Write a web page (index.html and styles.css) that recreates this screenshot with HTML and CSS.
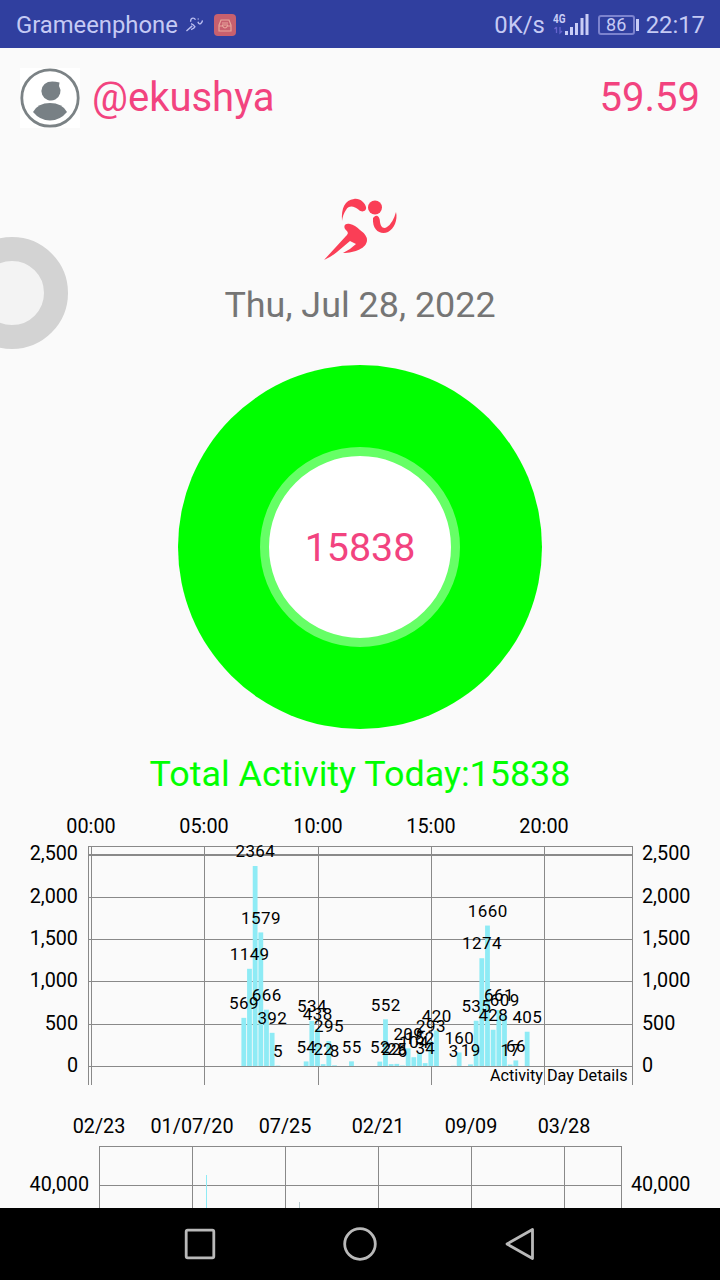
FILE: index.html
```html
<!DOCTYPE html>
<html lang="en">
<head>
<meta charset="utf-8">
<title>Activity</title>
<link rel="stylesheet" href="styles.css">
</head>
<body>
<div class="screen">
  <div class="status-bar">
    <span class="carrier">Grameenphone</span>
    <svg class="run-small" viewBox="0 0 74 64"><g fill="none" stroke="currentColor" stroke-width="6"><path d="M20 20Q20 4 31 4Q38 4 41 11M51 8h4M52 20Q56 34 65 27Q70 22 72 14M22 28Q34 33 39 42Q36 50 22 54M2 60L27 38"/></g></svg>
    <svg class="app-badge" viewBox="0 0 22 22"><rect width="22" height="22" rx="4" fill="#c8606e"/><g fill="none" stroke="#e8a59c" stroke-width="1.2"><path d="M5 17V11L7 6H15L17 11V17Z"/><path d="M5 12H8.500Q11 16 13.500 12H17M8 9H14M8 11H14"/></g></svg>
    <span class="speed">0K/s</span>
    <svg class="signal" viewBox="0 0 37 24">
      <text x="0" y="10" class="net" textLength="12.500" lengthAdjust="spacingAndGlyphs">4G</text>
      <path d="M3.500 20V14M1.500 16L3.500 14M7 14V20L9 18" fill="none" stroke="#6563cc" stroke-width="1.300"/>
      <g fill="#c9cdf6"><rect x="12" y="18" width="3" height="4"/><rect x="17" y="14" width="3" height="8"/><rect x="22" y="10" width="3" height="12"/><rect x="27.500" y="5" width="3" height="17"/><rect x="32.500" y="1" width="3" height="21"/></g>
    </svg>
    <span class="battery">86</span><span class="battery-tip"></span>
    <span class="clock">22:17</span>
  </div>

  <main class="content">
    <header class="profile">
      <svg class="avatar" viewBox="0 0 60 60"><rect width="60" height="60" fill="#fff"/><circle cx="30" cy="30" r="28.200" fill="none" stroke="#7b8285" stroke-width="2.800"/><path d="M39.500 14.500L39 18A9.500 9.500 0 1 1 28 14Q33 13 39.500 14.500Z" fill="#788085"/><path d="M13 44Q18 35 30 35T47 44Q40 52.500 30 52.500T13 44Z" fill="#788085"/></svg>
      <span class="user">@ekushya</span>
      <span class="score">59.59</span>
    </header>
    <svg class="runner" viewBox="0 0 74 64">
      <g fill="currentColor">
        <path d="M18 23C17 10 21 2 30 1C36 0 41 5 42 9C43 13 38 15 35 12C30 8 25 7 22 12Q19 16 18 23Z"/>
        <circle cx="51" cy="9.500" r="7"/>
        <path d="M50 19C53 16 56 19 56 24C57 30 60 31 63 29Q69 25 72 14C74 22 70 31 64 34C57 37 48 33 49 20Z"/>
        <path d="M0 62L22 38C25 35 24 34 21 31C19 27 22 25 26 26Q31 27 36 32Q43 37 43 42C43 50 31 55 19 55Q27 51 32 46L26 43L13 54Q7 59 0 62Z"/>
      </g>
    </svg>
    <div class="date">Thu, Jul 28, 2022</div>
    <div class="ring"><div class="ring-center">15838</div></div>
    <div class="total">Total Activity Today:15838</div>
    <svg class="chart" id="day-chart" viewBox="0 0 720 290"></svg>
    <svg class="chart" id="history-chart" viewBox="0 0 720 108"></svg>
  </main>

  <nav class="nav-bar">
    <svg viewBox="0 0 40 40"><rect x="6.200" y="6.200" width="27.600" height="27.600" rx="1.500"/></svg>
    <svg viewBox="0 0 40 40"><circle cx="20" cy="20" r="15.300"/></svg>
    <svg viewBox="0 0 40 40"><path d="M32.500 5.500V34.500L7 20Z"/></svg>
  </nav>
  <div class="float-button"></div>
</div>
<script src="charts.js"></script>
</body>
</html>
```
FILE: styles.css
```css
* { box-sizing: border-box; }
body { margin: 0; font-family: Roboto, sans-serif; background: #fafafa; }
.screen { position: relative; width: 720px; height: 1280px; overflow: hidden; display: flex; flex-direction: column; background: #fafafa; }
.status-bar { height: 48px; flex: none; background: #303f9f; color: #c5caf4; display: flex; align-items: center; padding: 2px 16px 0; font-size: 23.8px; white-space: nowrap; }
.carrier { width: 163px; }
.run-small { width: 17px; height: 15px; margin: 0 11px 2px 7px; color: #b9bdf0; }
.app-badge { width: 22px; height: 22px; }
.speed { margin-left: auto; margin-right: 8px; }
.signal { width: 37px; height: 24px; margin-right: 8px; }
.net { font: 700 12px Roboto, sans-serif; fill: #c9cdf6; }
.battery { width: 37px; height: 20px; border: 2px solid #7c83ce; border-radius: 3px; font-size: 18px; line-height: 16px; text-align: center; }
.battery-tip { width: 3px; height: 12px; margin-left: 1px; margin-right: 7px; background: #c9cdf6; }
.clock { margin-right: -1px; }
.content { flex: 1; min-height: 0; overflow: hidden; display: flex; flex-direction: column; align-items: center; }
.profile { width: 100%; height: 100px; flex: none; display: flex; align-items: center; padding: 0 20px; color: #f2437f; font-size: 40px; }
.avatar { width: 60px; height: 60px; margin-right: 12px; }
.user, .score { position: relative; top: -1px; }
.score { margin-left: auto; }
.runner { width: 74px; height: 64px; flex: none; margin: 50px 0 0 2px; color: #fa3e56; overflow: visible; }
.date { height: 44px; line-height: 44px; margin-top: 21px; font-size: 35.9px; color: #757575; }
.ring { width: 364px; height: 364px; flex: none; margin-top: 38px; border-radius: 50%; background: #0f0; display: flex; align-items: center; justify-content: center; }
.ring-center { width: 200px; height: 200px; border: 9px solid #66ff66; border-radius: 50%; background: #fff; color: #f2437f; font-size: 39.4px; line-height: 184px; text-align: center; }
.total { height: 44px; line-height: 44px; margin-top: 23px; font-size: 35.9px; color: #0f0; }
.chart { width: 720px; flex: none; display: block; }
#day-chart { height: 290px; margin-top: 14px; }
#history-chart { height: 108px; }
.grid { stroke: #898989; stroke-width: 1; shape-rendering: crispEdges; }
.axis-text { font-size: 19.8px; fill: #000; }
.value-text { font-size: 17px; fill: #000; letter-spacing: .4px; }
.caption-text { font-size: 16.2px; fill: #000; }
.bar { fill: #8eebf5; }
.nav-bar { height: 72px; flex: none; background: #000; display: flex; justify-content: center; align-items: center; gap: 120px; }
.nav-bar svg { width: 40px; height: 40px; fill: none; stroke: #b9b9b9; stroke-width: 2.8; stroke-linejoin: round; }
.float-button { position: absolute; left: -44px; top: 237px; width: 112px; height: 112px; border: 24px solid #d3d3d3; border-radius: 50%; background: #f3f3f3; }
```
FILE: charts.js
```js
const NS = 'http://www.w3.org/2000/svg';
function add(svg, tag, attrs, text) {
  const el = document.createElementNS(NS, tag);
  for (const k in attrs) el.setAttribute(k, attrs[k]);
  if (text !== undefined) el.textContent = text;
  svg.appendChild(el);
}
function line(svg, x1, y1, x2, y2) {
  add(svg, 'line', { x1, y1, x2, y2, class: 'grid' });
}
function label(svg, x, y, text, cls, anchor) {
  add(svg, 'text', { x, y, class: cls, 'text-anchor': anchor }, text);
}

// Day chart: quarter-hour slots counted from midnight.
const day = document.getElementById('day-chart');
const base = 256;
const unit = 0.0846;
const data = [[27,569],[28,1149],[29,2364],[30,1579],[31,666],[32,392],[33,5],[38,54],[39,534],[40,438],[41,22],[42,295],[43,8],[46,55],[51,52],[52,552],[53,22],[54,25],[55,6],[56,209],[57,104],[58,152],[59,34],[60,293],[61,420],[64,3],[65,160],[67,19],[68,535],[69,1274],[70,1660],[71,428],[72,661],[73,609],[74,17],[75,66],[77,405]];
['00:00', '05:00', '10:00', '15:00', '20:00'].forEach((t, i) => {
  const x = [91, 204, 318, 431, 544][i];
  label(day, x, 23, t, 'axis-text', 'middle');
  line(day, x + .5, 36, x + .5, 275);
});
line(day, 88.5, 36, 88.5, 275);
line(day, 632.5, 36, 632.5, 275);
line(day, 88, 36.5, 633, 36.5);
line(day, 88, 45.5, 632, 45.5);
['2,500', '2,000', '1,500', '1,000', '500', '0'].forEach((t, i) => {
  const y = [44, 87, 129, 171, 214, 256][i];
  line(day, 88, y + .5, 632, y + .5);
  label(day, 78, y + 6.4, t, 'axis-text', 'end');
  label(day, 642, y + 6.4, t, 'axis-text', 'start');
});
data.forEach(([slot, v]) => add(day, 'rect', { x: 91 + slot * 5.667 - 2.6, y: base - v * unit, width: 4.8, height: v * unit, class: 'bar' }));
data.forEach(([slot, v]) => label(day, 91 + slot * 5.667, base - v * unit - 8.8, v, 'value-text', 'middle'));
label(day, 627.5, 271, 'Activity Day Details', 'caption-text', 'end');

// History chart
const hist = document.getElementById('history-chart');
['02/23', '01/07/20', '07/25', '02/21', '09/09', '03/28'].forEach((t, i) => {
  const x = 99 + i * 93;
  label(hist, x, 33, t, 'axis-text', 'middle');
  line(hist, x + .5, 46, x + .5, 108);
});
line(hist, 621.5, 46, 621.5, 108);
line(hist, 99, 46.5, 622, 46.5);
line(hist, 99, 85.5, 622, 85.5);
label(hist, 89, 91.4, '40,000', 'axis-text', 'end');
label(hist, 631, 91.4, '40,000', 'axis-text', 'start');
add(hist, 'rect', { x: 206, y: 75, width: 1, height: 33, class: 'bar' });
add(hist, 'rect', { x: 299, y: 102, width: 1, height: 6, fill: '#b7c9cc' });
```
